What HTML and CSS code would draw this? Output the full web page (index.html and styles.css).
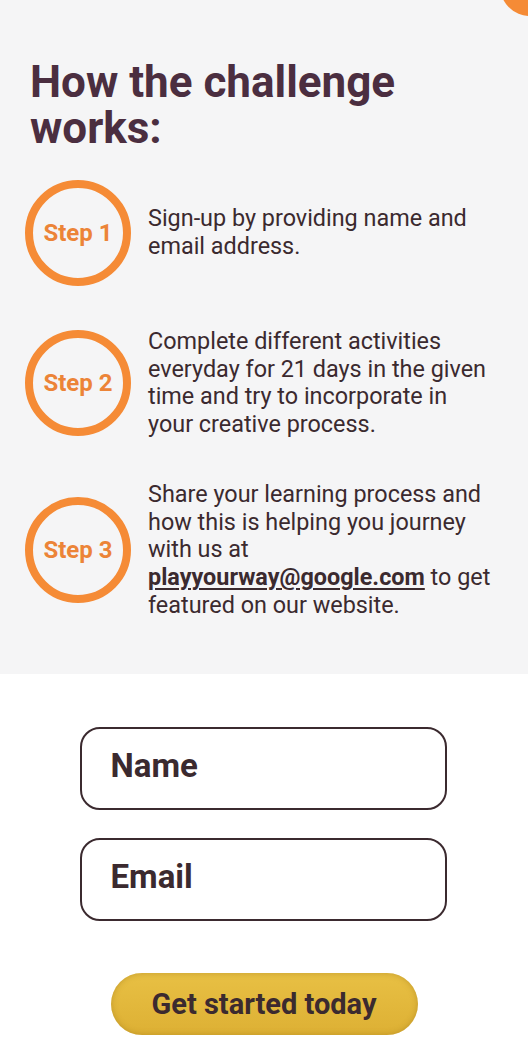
FILE: index.html
```html
<!DOCTYPE html>
<html lang="en">
<head>
<meta charset="utf-8">
<title>How the challenge works</title>
<link rel="stylesheet" href="styles.css">
</head>
<body>
<section class="how">
  <span class="blob"></span>
  <h1 class="title">How the challenge works:</h1>
  <ol class="steps">
    <li class="step">
      <div class="badge">Step 1</div>
      <p class="desc">Sign-up by providing name and email address.</p>
    </li>
    <li class="step">
      <div class="badge">Step 2</div>
      <p class="desc">Complete different activities everyday for 21 days in the given time and try to incorporate in your creative process.</p>
    </li>
    <li class="step">
      <div class="badge">Step 3</div>
      <p class="desc">Share your learning process and how this is helping you journey with us at <a class="mail" href="#">playyourway@google.com</a> to get featured on our website.</p>
    </li>
  </ol>
</section>
<form class="signup">
  <input class="field" type="text" placeholder="Name">
  <input class="field" type="email" placeholder="Email">
  <button class="cta" type="button">Get started today</button>
</form>
</body>
</html>
```
FILE: styles.css
```css
* { box-sizing: border-box; }
html, body { margin: 0; padding: 0; background: #ffffff; }
body { font-family: Roboto, "Liberation Sans", sans-serif; color: #3b2a2f; }

.how {
  position: relative;
  background: #f5f5f6;
  padding: 59px 0 55px 0;
  overflow: hidden;
}
.blob {
  position: absolute;
  width: 60px;
  height: 60px;
  border-radius: 50%;
  background: #f58b36;
  right: -32px;
  top: -44px;
}
.title {
  margin: 0 0 29px 0;
  padding-left: 30px;
  font-size: 44px;
  line-height: 46px;
  font-weight: 700;
  color: #4b2e40;
  max-width: 420px;
}
.steps {
  list-style: none;
  margin: 0;
  padding: 0 36px 0 25px;
  display: flex;
  flex-direction: column;
  gap: 42px;
}
.step {
  display: flex;
  align-items: center;
  gap: 17px;
}
.badge {
  flex: none;
  width: 106px;
  height: 106px;
  border: 8px solid #f58b36;
  border-radius: 50%;
  display: flex;
  align-items: center;
  justify-content: center;
  color: #ec8438;
  font-weight: 700;
  font-size: 24px;
  white-space: nowrap;
}
.desc {
  margin: 0;
  font-size: 23.4px;
  line-height: 27.7px;
  color: #3b2a2f;
}
.mail {
  color: #3b2a2f;
  font-weight: 700;
  text-decoration: underline;
  text-decoration-thickness: 2px;
  text-underline-offset: 3px;
}

.signup {
  display: flex;
  flex-direction: column;
  align-items: center;
  padding: 53px 0 0 0;
}
.field {
  display: block;
  width: 367px;
  height: 83px;
  margin: 0 0 28px -2px;
  padding: 0 0 6px 29px;
  border: 2px solid #3b2a2f;
  border-radius: 20px;
  background: #fff;
  font-family: Roboto, "Liberation Sans", sans-serif;
  font-size: 33px;
  font-weight: 700;
  color: #3b2a2f;
  outline: none;
}
.field::placeholder { color: #3b2a2f; opacity: 1; }
.cta {
  margin-top: 24px;
  width: 307px;
  height: 62px;
  border: none;
  border-radius: 31px;
  background: linear-gradient(#e8c044, #ddb034);
  box-shadow: inset 0 0 6px rgba(150, 110, 20, 0.45);
  font-family: Roboto, "Liberation Sans", sans-serif;
  font-size: 29px;
  font-weight: 700;
  color: #3b2a2f;
  cursor: pointer;
}
```
